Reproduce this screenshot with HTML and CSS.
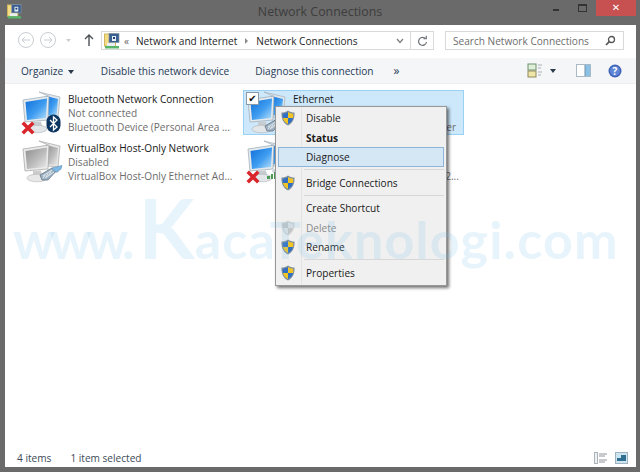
FILE: index.html
```html
<!DOCTYPE html>
<html lang="en">
<head>
  <meta charset="UTF-8" />
  <title>Network Connections</title>
  <link rel="stylesheet" href="styles.css">
</head>
<body>
  <svg class="defs" width="0" height="0">
    <defs>
      <linearGradient id="screen-blue" x1="0" y1="0" x2="1" y2="1">
        <stop offset="0" stop-color="#0f6fd8"/>
        <stop offset="0.55" stop-color="#3f9df0"/>
        <stop offset="1" stop-color="#b9e2fa"/>
      </linearGradient>
      <linearGradient id="screen-grey" x1="0" y1="0" x2="1" y2="1">
        <stop offset="0" stop-color="#8f8f8f"/>
        <stop offset="0.55" stop-color="#bcbcbc"/>
        <stop offset="1" stop-color="#ececec"/>
      </linearGradient>
      <symbol id="monitor-blue" viewBox="0 0 40 44">
        <path d="M17 1 L38 6 L36 27 L26 26 L26 5 Z" fill="#dfe6eb" stroke="#a4b0ba" stroke-width="0.700"/>
        <path d="M24 5 L36 8 L34.500 25 L24 24 Z" fill="url(#screen-blue)"/>
        <ellipse cx="31" cy="31" rx="6" ry="2.500" fill="#cfd5d9"/>
        <path d="M1 9 L27 5 L26 29 L3 31 Z" fill="#e4eaee" stroke="#9aa7b3" stroke-width="0.700"/>
        <path d="M3.500 11 L25 7.500 L24 27 L5 29 Z" fill="url(#screen-blue)"/>
        <path d="M11 31 L19 30.500 L20 35 L11 35 Z" fill="#c6ccd0"/>
        <ellipse cx="15" cy="38" rx="10" ry="3.800" fill="#e3e6e8" stroke="#adb4b9" stroke-width="0.600"/>
      </symbol>
      <symbol id="monitor-grey" viewBox="0 0 40 44">
        <path d="M17 1 L38 6 L36 27 L26 26 L26 5 Z" fill="#e6e6e6" stroke="#a8a8a8" stroke-width="0.700"/>
        <path d="M24 5 L36 8 L34.500 25 L24 24 Z" fill="url(#screen-grey)"/>
        <ellipse cx="31" cy="31" rx="6" ry="2.500" fill="#d6d6d6"/>
        <path d="M1 9 L27 5 L26 29 L3 31 Z" fill="#ebebeb" stroke="#a0a0a0" stroke-width="0.700"/>
        <path d="M3.500 11 L25 7.500 L24 27 L5 29 Z" fill="url(#screen-grey)"/>
        <path d="M11 31 L19 30.500 L20 35 L11 35 Z" fill="#cccccc"/>
        <ellipse cx="15" cy="38" rx="10" ry="3.800" fill="#e8e8e8" stroke="#b4b4b4" stroke-width="0.600"/>
      </symbol>
      <symbol id="red-x" viewBox="0 0 12 12">
        <path d="M1.500 1.500 L10.500 10.500 M10.500 1.500 L1.500 10.500" stroke="#d8262c" stroke-width="3" fill="none"/>
      </symbol>
      <symbol id="plug" viewBox="0 0 24 16">
        <path d="M1 10 L13 3 L18 5 L9 15 L3 15 Z" fill="#9fb2c2" stroke="#5f7385" stroke-width="0.800"/>
        <path d="M13 3 L23 0.500 L22 4 L18 7 L15 6 Z" fill="#7db9e6" stroke="#5f8fb5" stroke-width="0.600"/>
        <path d="M4 11 L13 5 M6 13 L15 7 M4 13.500 L6 10 M7 12 L9 8.500 M10 10 L12 6.500" stroke="#eef3f6" stroke-width="0.800"/>
      </symbol>
      <symbol id="shield" viewBox="0 0 14 16">
        <path d="M7 0.500 C9 2 11 2.500 13.500 2.500 C13.800 8.500 12 13 7 15.500 C2 13 0.200 8.500 0.500 2.500 C3 2.500 5 2 7 0.500 Z" fill="#7f8d9c"/>
        <path d="M7 2 L7 8 L2 8 C1.800 6.500 1.800 5 1.800 3.700 C3.800 3.600 5.500 3 7 2 Z" fill="#2f6fc4"/>
        <path d="M7 2 C8.500 3 10.200 3.600 12.200 3.700 C12.200 5 12.200 6.500 12 8 L7 8 Z" fill="#f2c522"/>
        <path d="M2 8 L7 8 L7 14 C4 12.500 2.600 10.500 2 8 Z" fill="#f2c522"/>
        <path d="M12 8 L7 8 L7 14 C10 12.500 11.400 10.500 12 8 Z" fill="#2f6fc4"/>
      </symbol>
      <symbol id="net-small" viewBox="0 0 16 16">
        <rect x="0.500" y="1" width="11" height="12" fill="#f3dc84" stroke="#cdb65e"/>
        <rect x="5" y="0.500" width="10" height="9" fill="#3a5f93" stroke="#8794a2" stroke-width="0.700"/>
        <rect x="8" y="3" width="4" height="5" fill="#e9f1f8"/>
        <rect x="9" y="4" width="2" height="2" fill="#1f3f73"/>
        <rect x="3" y="10" width="8" height="3" fill="#e9eef2"/>
        <rect x="1" y="13" width="14" height="2.500" fill="#58b568"/>
      </symbol>
    </defs>
  </svg>

  <div class="titlebar">
    <svg class="title-icon" width="15" height="15"><use href="#net-small"/></svg>
    <div class="title-text">Network Connections</div>
    <div class="window-btns">
      <span class="win-min"></span>
      <span class="win-max"></span>
      <span class="win-close">&#x2715;</span>
    </div>
  </div>

  <div class="window">
    <div class="navbar">
      <svg class="nav-arrows" width="84" height="20" viewBox="0 0 84 20">
        <g fill="none" stroke="#c9ced3">
          <circle cx="11" cy="10" r="7.500"/>
          <circle cx="33" cy="10" r="7.500"/>
          <path d="M15 10 H7 M10 7 L7 10 L10 13 M29 10 H37 M34 7 L37 10 L34 13"/>
        </g>
        <path d="M51 9 h5 l-2.500 3 Z" fill="#c9ced3"/>
        <path d="M74 16 V5 M70 9 L74 5 L78 9" fill="none" stroke="#4d5257" stroke-width="1.400"/>
      </svg>
      <div class="address">
        <svg class="addr-icon" width="16" height="16"><use href="#net-small"/></svg>
        <span class="crumb-more">&laquo;</span>
        <span class="crumb">Network and Internet</span>
        <span class="crumb-sep"></span>
        <span class="crumb">Network Connections</span>
        <svg class="addr-drop" width="8" height="6" viewBox="0 0 8 6"><path d="M1 1 L4 4.500 L7 1" fill="none" stroke="#7b7f84" stroke-width="1.300"/></svg>
        <div class="addr-refresh">
          <svg width="11" height="12" viewBox="0 0 11 12"><path d="M8.800 4 A4 4 0 1 0 9.500 7 M6.500 3.600 H9.300 V0.800" fill="none" stroke="#72777c" stroke-width="1.200"/></svg>
        </div>
      </div>
      <div class="search">
        <span>Search Network Connections</span>
        <svg width="11" height="11" viewBox="0 0 11 11"><circle cx="6.500" cy="4.500" r="3" fill="none" stroke="#555" stroke-width="1.300"/><path d="M4.300 6.700 L1 10" stroke="#555" stroke-width="1.700"/></svg>
      </div>
    </div>

    <div class="toolbar">
      <span class="tool organize">Organize <i class="caret"></i></span>
      <span class="tool disable">Disable this network device</span>
      <span class="tool diagnose">Diagnose this connection</span>
      <span class="tool more">&raquo;</span>
      <div class="tool-icons">
        <svg class="view-icon" width="16" height="15" viewBox="0 0 16 15">
          <rect x="1" y="1" width="8" height="6" fill="#dff0d8" stroke="#6f8f73"/>
          <rect x="1" y="8" width="8" height="6" fill="#f0e6a8" stroke="#8f8a5f"/>
          <path d="M11 2 h4 M11 5 h3 M11 9 h4 M11 12 h3" stroke="#a9afb5"/>
        </svg>
        <i class="caret"></i>
        <svg class="pane-icon" width="15" height="13" viewBox="0 0 15 13">
          <rect x="0.500" y="0.500" width="14" height="12" fill="#fff" stroke="#a9b9c6"/>
          <rect x="9" y="1" width="5" height="11" fill="#8cc1e6"/>
          <path d="M9 1 V12" stroke="#6f8fa8"/>
        </svg>
        <svg class="help-icon" width="14" height="14" viewBox="0 0 14 14">
          <circle cx="7" cy="7" r="6.500" fill="#3f63b8"/>
          <circle cx="7" cy="7" r="5" fill="#5f86d6"/>
          <text x="7" y="10.500" class="help-q">?</text>
        </svg>
      </div>
    </div>

    <div class="content">
      <div class="net-grid">
        <div class="net-item">
          <div class="net-icon">
            <svg class="mon" width="40" height="44"><use href="#monitor-blue"/></svg>
            <svg class="badge-x" width="14" height="14"><use href="#red-x"/></svg>
            <svg class="badge-bt" width="15" height="19" viewBox="0 0 15 19">
              <rect x="0.500" y="0.500" width="14" height="18" rx="7" fill="#0b3560"/>
              <path d="M4 6 L11 13 L7.500 16 V3 L11 6 L4 13" fill="none" stroke="#fff" stroke-width="1.300"/>
            </svg>
          </div>
          <div class="net-text">
            <div class="net-name">Bluetooth Network Connection</div>
            <div class="net-line">Not connected</div>
            <div class="net-line">Bluetooth Device (Personal Area ...</div>
          </div>
        </div>

        <div class="net-item selected">
          <div class="net-icon">
            <svg class="mon" width="40" height="44"><use href="#monitor-blue"/></svg>
            <span class="check">&#x2714;</span>
            <svg class="badge-plug" width="24" height="16"><use href="#plug"/></svg>
          </div>
          <div class="net-text">
            <div class="net-name">Ethernet</div>
            <div class="net-line">Network</div>
            <div class="net-line">Realtek PCIe GBE Family Controller</div>
          </div>
        </div>

        <div class="net-item">
          <div class="net-icon">
            <svg class="mon" width="40" height="44"><use href="#monitor-grey"/></svg>
            <svg class="badge-plug" width="24" height="16"><use href="#plug"/></svg>
          </div>
          <div class="net-text">
            <div class="net-name">VirtualBox Host-Only Network</div>
            <div class="net-line">Disabled</div>
            <div class="net-line">VirtualBox Host-Only Ethernet Ad...</div>
          </div>
        </div>

        <div class="net-item">
          <div class="net-icon">
            <svg class="mon" width="40" height="44"><use href="#monitor-blue"/></svg>
            <svg class="badge-x" width="14" height="14"><use href="#red-x"/></svg>
            <svg class="badge-bars" width="12" height="9" viewBox="0 0 12 9"><path d="M1 5 h3 v3 h-3 Z M5 3 h2 v5 h-2 Z M8 1 h3 v7 h-3 Z" fill="#4d9a55"/></svg>
          </div>
          <div class="net-text">
            <div class="net-name">Wi-Fi</div>
            <div class="net-line">Not connected</div>
            <div class="net-line">Qualcomm Atheros AR9285 802 2...</div>
          </div>
        </div>
      </div>

      <div class="ctx-menu">
        <div class="ctx-item"><svg class="shield" width="14" height="16"><use href="#shield"/></svg>Disable</div>
        <div class="ctx-item bold">Status</div>
        <div class="ctx-item hover">Diagnose</div>
        <div class="ctx-sep"></div>
        <div class="ctx-item"><svg class="shield" width="14" height="16"><use href="#shield"/></svg>Bridge Connections</div>
        <div class="ctx-sep"></div>
        <div class="ctx-item">Create Shortcut</div>
        <div class="ctx-item muted"><svg class="shield faded" width="14" height="16"><use href="#shield"/></svg>Delete</div>
        <div class="ctx-item"><svg class="shield" width="14" height="16"><use href="#shield"/></svg>Rename</div>
        <div class="ctx-sep"></div>
        <div class="ctx-item"><svg class="shield" width="14" height="16"><use href="#shield"/></svg>Properties</div>
      </div>

      <div class="watermark"><span class="wm-www">www.</span><span class="wm-big">K</span><span class="wm-small">acaTeknologi.com</span></div>
    </div>

    <div class="statusbar">
      <span class="count">4 items</span>
      <span class="sel">1 item selected</span>
      <div class="status-icons">
        <svg width="13" height="12" viewBox="0 0 13 12">
          <rect x="0.500" y="0.500" width="3" height="11" fill="#eef1f4" stroke="#aab2ba"/>
          <path d="M5 2 h8 M5 4 h6 M5 8 h8 M5 10 h6" stroke="#8d949b"/>
        </svg>
        <svg width="13" height="12" viewBox="0 0 13 12">
          <rect x="0.500" y="0.500" width="12" height="11" fill="#cfe3ef" stroke="#9db3c2"/>
          <rect x="2" y="3" width="9" height="6" fill="#2f6f8f"/>
          <rect x="2" y="3" width="4" height="3" fill="#c9e6f5"/>
        </svg>
      </div>
    </div>
  </div>
</body>
</html>
```

FILE: styles.css
```css
* {
  margin: 0;
  padding: 0;
  box-sizing: border-box;
}
body {
  width: 640px;
  height: 472px;
  overflow: hidden;
  background-color: #6a6a6a;
  font-family: 'Open Sans', 'Noto Sans', sans-serif;
  font-size: 10.100px;
  color: #2b2b2b;
  display: flex;
  flex-direction: column;
  padding: 0 4px 5px 5px;
}
.defs {
  position: absolute;
}
.titlebar {
  height: 25px;
  display: flex;
  align-items: flex-start;
  flex-shrink: 0;
}
.title-icon {
  margin: 4px 0 0 2px;
}
.title-text {
  flex: 1;
  text-align: center;
  font-size: 12.400px;
  line-height: 24px;
  color: #3d3d3d;
  padding-left: 67px;
}
.window-btns {
  display: flex;
  align-items: flex-start;
  width: 85px;
}
.win-min {
  width: 6px;
  height: 2px;
  background: #333;
  margin: 9px 0 0 2px;
}
.win-max {
  width: 9px;
  height: 8px;
  border: 1px solid #333;
  border-top-width: 2px;
  margin: 4px 0 0 19px;
}
.win-close {
  width: 40px;
  height: 16px;
  margin-left: 9px;
  background: #c75050;
  color: #fff;
  font-size: 10px;
  font-weight: bold;
  line-height: 15px;
  text-align: center;
  font-family: 'DejaVu Sans', sans-serif;
}
.window {
  flex: 1;
  display: flex;
  flex-direction: column;
  background: #fff;
  min-height: 0;
}
.navbar {
  height: 33px;
  display: flex;
  align-items: flex-start;
  padding-top: 6px;
  flex-shrink: 0;
}
.nav-arrows {
  margin-left: 10px;
  margin-right: 2px;
  margin-top: -1px;
}
.address {
  width: 333px;
  height: 19px;
  border: 1px solid #d9d9d9;
  display: flex;
  align-items: center;
  color: #1e1e1e;
}
.addr-icon {
  margin-left: 2px;
}
.crumb-more {
  margin: 0 7px 0 4px;
  color: #666;
}
.crumb-sep {
  width: 0;
  height: 0;
  border-left: 3px solid #8a8a8a;
  border-top: 3px solid transparent;
  border-bottom: 3px solid transparent;
  margin: 0 8px 0 8px;
}
.addr-drop {
  margin-left: auto;
  margin-right: 6px;
}
.addr-refresh {
  width: 23px;
  height: 17px;
  border-left: 1px solid #d9d9d9;
  display: flex;
  align-items: center;
  justify-content: center;
}
.search {
  width: 179px;
  height: 19px;
  margin-left: 11px;
  border: 1px solid #d9d9d9;
  display: flex;
  align-items: center;
  justify-content: space-between;
  padding: 0 7px 0 7px;
  color: #6d6d6d;
}
.toolbar {
  height: 26px;
  background: #f5f6f7;
  display: flex;
  align-items: center;
  flex-shrink: 0;
  color: #1f3a57;
  border-bottom: 1px solid #eceef0;
}
.organize {
  margin-left: 16px;
}
.disable {
  margin-left: 27px;
}
.diagnose {
  margin-left: 26px;
}
.more {
  margin-left: 20px;
  font-size: 12px;
  line-height: 12px;
}
.caret {
  display: inline-block;
  width: 0;
  height: 0;
  border-top: 4px solid #2b3a4a;
  border-left: 3.500px solid transparent;
  border-right: 3.500px solid transparent;
  margin-left: 2px;
  vertical-align: 1px;
}
.tool-icons {
  margin-left: auto;
  margin-right: 14px;
  display: flex;
  align-items: center;
}
.tool-icons .caret {
  margin: 0 0 0 7px;
}
.pane-icon {
  margin-left: 20px;
}
.help-icon {
  margin-left: 17px;
}
.help-q {
  fill: #fff;
  font-size: 10px;
  font-weight: bold;
  text-anchor: middle;
}
.content {
  flex: 1;
  position: relative;
  min-height: 0;
}
.net-grid {
  display: grid;
  grid-template-columns: 225px 221px;
  grid-auto-rows: 45px;
  row-gap: 4px;
  padding: 6px 0 0 13px;
}
.net-item {
  display: flex;
  position: relative;
  border: 1px solid transparent;
  min-width: 0;
}
.net-item.selected {
  background: #cde8fb;
  border-color: #99d1f5;
}
.net-icon {
  width: 49px;
  flex-shrink: 0;
  position: relative;
}
.mon {
  position: absolute;
  left: 3px;
  top: 0;
}
.badge-x {
  position: absolute;
  left: 2px;
  top: 30px;
}
.badge-bt {
  position: absolute;
  left: 27px;
  top: 23px;
}
.badge-plug {
  position: absolute;
  left: 20px;
  top: 25px;
}
.badge-bars {
  position: absolute;
  left: 22px;
  top: 31px;
}
.check {
  position: absolute;
  left: 2px;
  top: 1px;
  width: 13px;
  height: 13px;
  background: #fff;
  border: 1px solid #8a9aa8;
  color: #111;
  font-size: 10px;
  line-height: 11px;
  text-align: center;
  font-family: 'DejaVu Sans', sans-serif;
}
.net-text {
  flex: 1;
  min-width: 0;
  line-height: 14px;
  padding-top: 1px;
}
.net-name {
  color: #1a1a1a;
}
.net-line {
  color: #6d6d6d;
  white-space: nowrap;
}
.ctx-menu {
  position: absolute;
  left: 270px;
  top: 22px;
  width: 172px;
  height: 180px;
  background: #f0f0f0;
  border: 1px solid #979797;
  box-shadow: 2px 2px 3px rgba(0, 0, 0, 0.55);
  padding: 1px 2px;
  background-image: linear-gradient(#e3e3e3, #e3e3e3);
  background-size: 1px 100%;
  background-position: 25px 0;
  background-repeat: no-repeat;
}
.ctx-item {
  height: 19.500px;
  line-height: 19px;
  padding-left: 27px;
  position: relative;
  color: #1a1a1a;
  border: 1px solid transparent;
}
.ctx-item.bold {
  font-weight: bold;
}
.ctx-item.hover {
  background: #d5e6f5;
  border-color: #8db4d9;
  line-height: 18px;
}
.ctx-item.muted {
  color: #8a8a8a;
}
.shield {
  position: absolute;
  left: 2px;
  top: 1px;
}
.shield.faded {
  opacity: 0.3;
  filter: grayscale(1);
}
.ctx-sep {
  height: 1px;
  background: #d8d8d8;
  margin: 2.500px 0 2.500px 26px;
}
.watermark {
  position: absolute;
  left: 8px;
  top: 98px;
  color: rgba(120, 190, 230, 0.17);
  font-family: 'Lato', sans-serif;
  font-weight: bold;
  white-space: nowrap;
  pointer-events: none;
  line-height: 90px;
}
.wm-www {
  font-size: 52px;
  letter-spacing: -5px;
  margin-right: 9px;
}
.wm-small {
  font-size: 52px;
  letter-spacing: 1.200px;
}
.wm-big {
  font-size: 82px;
}
.statusbar {
  height: 27px;
  display: flex;
  align-items: center;
  flex-shrink: 0;
  padding-top: 8px;
  color: #3d4a57;
}
.count {
  margin-left: 12px;
}
.sel {
  margin-left: 19px;
}
.status-icons {
  margin-left: auto;
  margin-right: 8px;
  display: flex;
  gap: 8px;
}
```
